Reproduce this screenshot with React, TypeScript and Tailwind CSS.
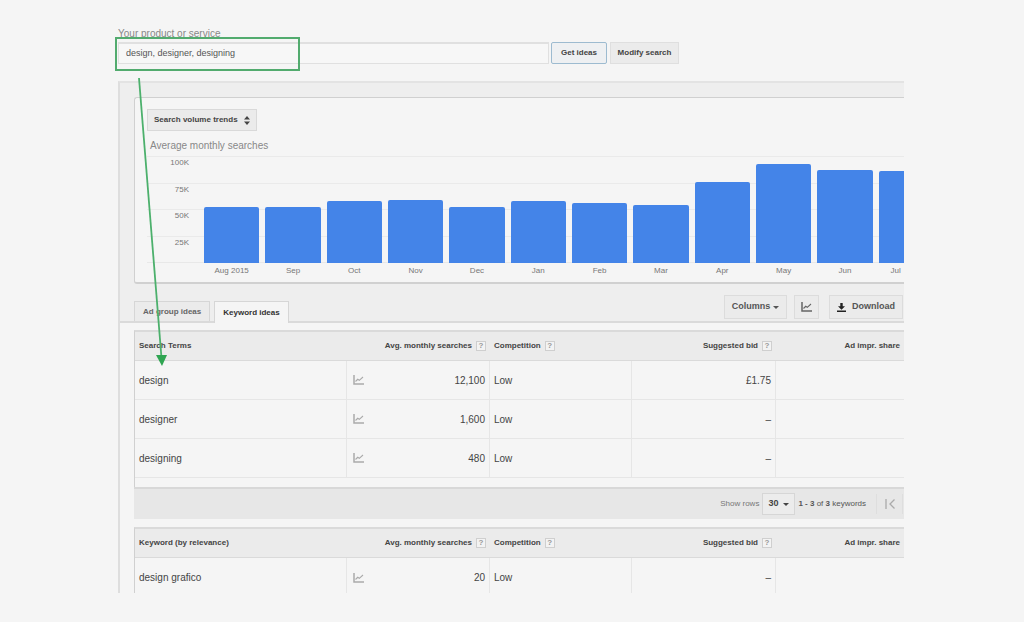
import { useState } from 'react'
import clsx from 'clsx'

const months = [
  { label: 'Aug 2015', value: 52 },
  { label: 'Sep', value: 52 },
  { label: 'Oct', value: 58 },
  { label: 'Nov', value: 59 },
  { label: 'Dec', value: 52 },
  { label: 'Jan', value: 58 },
  { label: 'Feb', value: 56 },
  { label: 'Mar', value: 54 },
  { label: 'Apr', value: 76 },
  { label: 'May', value: 93 },
  { label: 'Jun', value: 87 },
  { label: 'Jul', value: 86 },
]

const ticks = ['100K', '75K', '50K', '25K']

type Row = { term: string; searches: string; competition: string; bid: string }

const searchTerms: Row[] = [
  { term: 'design', searches: '12,100', competition: 'Low', bid: '£1.75' },
  { term: 'designer', searches: '1,600', competition: 'Low', bid: '–' },
  { term: 'designing', searches: '480', competition: 'Low', bid: '–' },
]

const relatedKeywords: Row[] = [
  { term: 'design grafico', searches: '20', competition: 'Low', bid: '–' },
]

function TrendIcon({ className }: { className?: string }) {
  return (
    <svg viewBox="0 0 11 10" className={clsx('h-[10px] w-[11px] shrink-0', className)} fill="none" stroke="currentColor" aria-hidden="true">
      <path d="M1 0v9h10" strokeWidth="1.5" />
      <path d="M2.5 6.5l2.2-2.2 1.6 1L10 2" strokeWidth="1.1" />
    </svg>
  )
}

function Caret({ className }: { className?: string }) {
  return (
    <svg viewBox="0 0 6 3" className={clsx('h-[3px] w-[6px] shrink-0', className)} fill="currentColor" aria-hidden="true">
      <path d="M0 0h6L3 3z" />
    </svg>
  )
}

function Help() {
  return (
    <button
      type="button"
      aria-label="Help"
      className="ml-1 inline-flex h-[10px] w-[10px] items-center justify-center border border-[#cfcfcf] bg-[#f3f3f3] align-middle text-[8px] leading-none font-bold text-[#999]"
    >
      ?
    </button>
  )
}

function KeywordTable({ title, rows, last }: { title: string; rows: Row[]; last?: boolean }) {
  return (
    <table className="w-full table-fixed border-separate border-spacing-0 border-t-2 border-l border-t-[#dadada] border-l-[#d0d0d0] text-[10px] text-[#444]">
      <colgroup>
        <col />
        <col className="w-[143px]" />
        <col className="w-[142px]" />
        <col className="w-[144px]" />
        <col className="w-[128px]" />
      </colgroup>
      <thead>
        <tr className="h-[29px] bg-[#ebebeb] text-[8px] whitespace-nowrap [&>th]:border-b [&>th]:border-[#dadada] [&>th]:py-0 [&>th]:font-bold">
          <th scope="col" className="pl-1 text-left">{title}</th>
          <th scope="col" className="pr-1 text-right">Avg. monthly searches<Help /></th>
          <th scope="col" className="pl-1 text-left">Competition<Help /></th>
          <th scope="col" className="pr-1 text-right">Suggested bid<Help /></th>
          <th scope="col" className="pr-1 text-right">Ad impr. share</th>
        </tr>
      </thead>
      <tbody>
        {rows.map(row => (
          <tr
            key={row.term}
            className={clsx(
              '[&>td]:border-[#e6e6e6] [&>td]:pb-0',
              last ? 'h-[35px] [&>td]:pt-1' : 'h-[39px] [&>td]:border-b [&>td]:pt-0'
            )}
          >
            <td className="border-r pl-1">{row.term}</td>
            <td className="border-r pr-1 pl-[6px]">
              <div className="flex items-center justify-between">
                <TrendIcon className="text-[#aaa]" />
                {row.searches}
              </div>
            </td>
            <td className="border-r pl-1">{row.competition}</td>
            <td className="border-r pr-1 text-right">{row.bid}</td>
            <td />
          </tr>
        ))}
      </tbody>
    </table>
  )
}

function VolumeChart() {
  return (
    <figure>
      <figcaption className="pl-[3px] text-[10px] leading-[14px] text-[#888]">Average monthly searches</figcaption>
      <div className="relative mt-[3px] h-[107px]">
        <div className="absolute inset-0 flex flex-col border-b border-[#e8e8e8]">
          {ticks.map(tick => (
            <div key={tick} className="flex-1 border-t border-[#eaeaea]">
              <span className="block w-[42px] text-right text-[8px] leading-[12px] text-[#777]">{tick}</span>
            </div>
          ))}
        </div>
        <div className="relative -mr-[30px] ml-[57px] flex h-full items-end gap-[6px]">
          {months.map(month => (
            <div
              key={month.label}
              className="flex-1 rounded-t-[2px] bg-[#4484e8]"
              style={{ height: `${month.value}%` }}
            />
          ))}
        </div>
      </div>
      <div className="-mr-[30px] ml-[57px] flex gap-[6px] pt-[1px] text-[8px] leading-[14px] text-[#777]">
        {months.map((month, i) => (
          <span
            key={month.label}
            className={clsx('min-w-0 flex-1', i === months.length - 1 ? 'text-left indent-3' : 'text-center')}
          >
            {month.label}
          </span>
        ))}
      </div>
    </figure>
  )
}

export default function App() {
  const [query, setQuery] = useState('design, designer, designing')
  const [pageSize, setPageSize] = useState('30')
  const [tab, setTab] = useState('Keyword ideas')

  return (
    <div className="min-h-screen bg-[#f5f5f5] pt-[26px] pr-[120px] pl-[118px] font-['Liberation_Sans',Arial,sans-serif] text-[#444]">
      <main className="relative">
        <form onSubmit={e => e.preventDefault()}>
          <label htmlFor="product" className="block text-[10px] leading-[16px] text-[#888]">
            Your product or service
          </label>
          <div className="flex h-[22px] items-stretch text-[8px]">
            <input
              id="product"
              value={query}
              onChange={e => setQuery(e.target.value)}
              className="w-[431px] border border-t-2 border-[#e0e0e0] bg-[#f7f7f7] px-[7px] text-[9px] text-[#555] outline-none"
            />
            <button type="submit" className="ml-[2px] w-[56px] rounded-[2px] border border-[#9dbbd0] bg-[#eef0f2] font-bold">
              Get ideas
            </button>
            <button type="button" className="ml-[3px] w-[69px] border border-[#dfdfdf] bg-[#ebebeb] font-bold whitespace-nowrap">
              Modify search
            </button>
          </div>
        </form>

        <div className="mt-[17px] overflow-hidden border-t-2 border-l-2 border-t-[#e3e3e3] border-l-[#dedede]">
          <div className="border-b-2 border-[#dadada] bg-[#eee] pt-[14px] pl-[14px]">
            <section className="rounded-l-[3px] border border-r-0 border-b-2 border-[#d0d0d0] bg-[#f5f5f5] pt-[11px] pb-[4px] pl-3">
              <button type="button" className="mb-2 flex h-[22px] w-[110px] items-center justify-between border border-[#d9d9d9] bg-[#ebebeb] px-[6px] text-[8px] font-bold whitespace-nowrap">
                Search volume trends
                <svg viewBox="0 0 6 9" className="h-[9px] w-[6px] shrink-0" fill="currentColor" aria-hidden="true">
                  <path d="M3 0l3 3.5H0zM3 9L0 5.5h6z" />
                </svg>
              </button>
              <VolumeChart />
            </section>

            <div className="mt-[11px] flex h-[26px] items-start justify-between pr-[1px] text-[8px] font-bold">
              <div role="tablist" className="flex items-end self-end">
                {['Ad group ideas', 'Keyword ideas'].map(name => (
                  <button
                    key={name}
                    type="button"
                    role="tab"
                    aria-selected={tab === name}
                    onClick={() => setTab(name)}
                    className={clsx(
                      'mr-1 border border-b-0 border-[#d6d6d6] px-2 whitespace-nowrap',
                      tab === name ? '-mb-[2px] h-[22px] bg-[#f5f5f5] text-[#333]' : 'h-[20px] bg-[#ebebeb] text-[#666]'
                    )}
                  >
                    {name}
                  </button>
                ))}
              </div>
              <div className="flex items-center text-[9px] text-[#555] *:flex *:h-[24px] *:items-center *:justify-center *:border *:border-[#dcdcdc] *:bg-[#ebebeb]">
                <button type="button" className="w-[63px] gap-[3px]">
                  Columns <Caret />
                </button>
                <button type="button" aria-label="Show chart" className="ml-[7px] w-[25px]">
                  <TrendIcon className="text-[#666]" />
                </button>
                <button type="button" className="ml-[10px] w-[74px] gap-[6px]">
                  <svg viewBox="0 0 9 9" className="h-[9px] w-[9px] shrink-0 text-[#222]" fill="currentColor" aria-hidden="true">
                    <path d="M3.3 0h2.4v3.3H8L4.5 6.8 1 3.300h2.300zM0 7.500h9V9H0z" />
                  </svg>
                  Download
                </button>
              </div>
            </div>
          </div>

          <div className="pt-[7px] pl-[14px]">
            <KeywordTable title="Search Terms" rows={searchTerms} />
            <div className="h-[9px] border-l border-[#d0d0d0]" />
            <div className="flex h-[32px] items-center justify-end border-t-2 border-[#d8d8d8] bg-[#e7e7e7] text-[8px] whitespace-nowrap">
              <label htmlFor="page-size" className="text-[#777]">Show rows</label>
              <div className="relative ml-[3px]">
                <select
                  id="page-size"
                  value={pageSize}
                  onChange={e => setPageSize(e.target.value)}
                  className="h-[22px] w-[33px] appearance-none border border-[#d6d6d6] bg-[#ececec] pl-[5px] text-[9px] font-bold outline-none"
                >
                  <option>30</option>
                  <option>50</option>
                  <option>100</option>
                </select>
                <Caret className="pointer-events-none absolute top-[10px] right-[6px]" />
              </div>
              <span className="ml-[3px] text-[#555]">
                <b>1 - 3</b> of <b>3</b> keywords
              </span>
              <button
                type="button"
                aria-label="First page"
                className="mr-[1px] ml-[10px] flex h-[20px] w-[27px] items-center justify-center border-x border-[#dedede] text-[#aaa]"
              >
                <svg viewBox="0 0 10 10" className="h-[10px] w-[10px]" fill="none" stroke="currentColor" strokeWidth="1.3" aria-hidden="true">
                  <path d="M1 0v10M9.5 0.5L5 5l4.5 4.5" />
                </svg>
              </button>
            </div>
            <div className="mt-2">
              <KeywordTable title="Keyword (by relevance)" rows={relatedKeywords} last />
            </div>
          </div>
        </div>

        {/* Callout from the query box to the matching search terms */}
        <div className="pointer-events-none absolute top-[11px] -left-[3px] h-[34px] w-[185px] border-2 border-[#52ab6e]" />
        <svg
          viewBox="0 0 50 300"
          className="pointer-events-none absolute top-[50px] left-[2px] h-[300px] w-[50px]"
          aria-hidden="true"
        >
          <path d="M19 2l22.500 280" stroke="#4cb06c" strokeWidth="1.8" fill="none" />
          <path d="M36 279h11l-5 11z" fill="#2fa552" />
        </svg>
      </main>
    </div>
  )
}
